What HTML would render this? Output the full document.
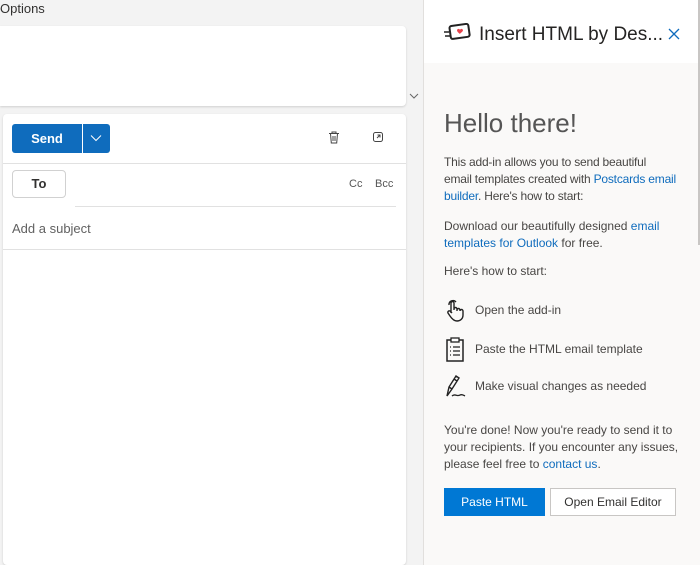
<!DOCTYPE html>
<html><head><style>
*{margin:0;padding:0;box-sizing:border-box}
body{width:700px;height:565px;overflow:hidden;background:#f3f3f3;font-family:"Liberation Sans",sans-serif;position:relative;color:#323130}
.a{position:absolute}
.p{font-size:12px;color:#484644;line-height:17px}
.l{color:#0f6cbd}
</style></head><body>
<div class="a" style="left:0;top:1px;font-size:13px;color:#323130">Options</div>
<div class="a" style="left:0;top:26px;width:406px;height:80px;background:#fff;border-radius:0 4px 4px 0;box-shadow:0 1px 2px rgba(0,0,0,.15)"></div>
<svg class="a" style="left:409px;top:92px" width="10" height="8"><path d="M1 2l4 4 4-4" stroke="#666" fill="none"/></svg>
<div class="a" style="left:3px;top:114px;width:403px;height:451px;background:#fff;border-radius:4px;box-shadow:0 1px 2px rgba(0,0,0,.15)"></div>
<div class="a" style="left:12px;top:124px;width:98px;height:29px;background:#0f6cbd;border-radius:3px"></div>
<div class="a" style="left:12px;top:124px;width:70px;height:29px;color:#fff;font-weight:bold;font-size:13px;line-height:29px;text-align:center">Send</div>
<div class="a" style="left:82px;top:124px;width:1px;height:29px;background:#fff"></div>
<svg class="a" style="left:90px;top:134px" width="12" height="8"><path d="M1 1.5l5 5 5-5" stroke="#fff" fill="none"/></svg>
<svg class="a" style="left:328px;top:131px" width="12" height="13"><path d="M1 2.5h10M4 2.5V1h4v1.5M2.5 2.5l.8 9.5h5.4l.8-9.5M5 5v5M7 5v5" stroke="#444" fill="none" stroke-width="1"/></svg>
<svg class="a" style="left:372px;top:131px" width="12" height="12"><rect x="1.5" y="1.5" width="9" height="9" rx="2" stroke="#444" fill="none"/><path d="M5 7l3-3M5.5 4H8v2.5" stroke="#444" fill="none"/></svg>
<div class="a" style="left:3px;top:163px;width:403px;height:1px;background:#e1e1e1"></div>
<div class="a" style="left:12px;top:170px;width:54px;height:28px;border:1px solid #d1d1d1;border-radius:4px;font-size:13px;font-weight:bold;line-height:26px;text-align:center">To</div>
<div class="a" style="left:349px;top:178px;font-size:11px;color:#555">Cc</div>
<div class="a" style="left:375px;top:178px;font-size:11px;color:#555">Bcc</div>
<div class="a" style="left:75px;top:206px;width:321px;height:1px;background:#e1e1e1"></div>
<div class="a" style="left:12px;top:221px;font-size:13px;color:#616161">Add a subject</div>
<div class="a" style="left:3px;top:249px;width:403px;height:1px;background:#e1e1e1"></div>

<div class="a" style="left:423px;top:0;width:277px;height:565px;background:#faf9f8;border-left:1px solid #e1dfdd"></div>
<div class="a" style="left:424px;top:0;width:276px;height:63px;background:#fff"></div>
<svg class="a" style="left:443px;top:23px" width="28" height="20"><rect x="7" y="2" width="19" height="13" rx="2" transform="rotate(-8 16 8)" stroke="#222" stroke-width="2" fill="none"/><path d="M14 7c1-2 3-1 3 0 0-1 2-2 3 0 0 2-3 3-3 4-1-1-3-2-3-4z" fill="#e8434b"/><path d="M1 9h5M2 13h5" stroke="#222" stroke-width="1.5"/></svg>
<div class="a" style="left:479px;top:24px;font-size:19px;color:#252423">Insert HTML by Des...</div>
<svg class="a" style="left:668px;top:28px" width="12" height="12"><path d="M1 1l10 10M11 1L1 11" stroke="#0f6cbd" stroke-width="1.3"/></svg>
<div class="a" style="left:444px;top:108px;font-size:26px;color:#555;">Hello there!</div>
<div class="a p" style="left:444px;top:154px;white-space:nowrap;letter-spacing:-0.2px">This add-in allows you to send beautiful<br>email templates created with <span class="l">Postcards email</span><br><span class="l">builder</span>. Here's how to start:</div>
<div class="a p" style="left:444px;top:218px;width:240px">Download our beautifully designed <span class="l">email templates for Outlook</span> for free.</div>
<div class="a p" style="left:444px;top:263px">Here's how to start:</div>
<svg class="a" style="left:445px;top:297px" width="20" height="26"><path d="M6 16V6a1.5 1.5 0 013 0v7M9 12a1.5 1.5 0 013 0v2M12 13a1.5 1.5 0 013 0v1M15 14a1.5 1.5 0 013 0v4c0 4-3 6-6 6s-5-2-7-5l-2-3a1.5 1.5 0 012-2l2 2M4 8a4 4 0 017-3" stroke="#222" stroke-width="1.4" fill="none"/></svg>
<div class="a p" style="left:475px;top:302px">Open the add-in</div>
<svg class="a" style="left:446px;top:337px" width="18" height="25"><rect x="1" y="3" width="16" height="21" stroke="#222" stroke-width="1.5" fill="none"/><rect x="5" y="1" width="8" height="4" fill="#fff" stroke="#222" stroke-width="1.3"/><path d="M4 10h1M7 10h7M4 14h1M7 14h7M4 18h1M7 18h7" stroke="#222" stroke-width="1.3"/></svg>
<div class="a p" style="left:475px;top:341px">Paste the HTML email template</div>
<svg class="a" style="left:444px;top:374px" width="24" height="26"><path d="M3 22L5 13 12 2l3 2-7 11-5 7zM5 13l3 2M10 5l3 2" stroke="#222" stroke-width="1.4" fill="none"/><path d="M8 22c3-3 5 1 8-1 2-1 3 0 5 1" stroke="#222" stroke-width="1.3" fill="none"/></svg>
<div class="a p" style="left:475px;top:378px">Make visual changes as needed</div>
<div class="a p" style="left:444px;top:422px;width:250px">You're done! Now you're ready to send it to your recipients. If you encounter any issues, please feel free to <span class="l">contact us</span>.</div>
<div class="a" style="left:444px;top:488px;width:101px;height:28px;background:#0078d4;color:#fff;font-size:12px;line-height:28px;text-align:center">Paste HTML</div>
<div class="a" style="left:550px;top:488px;width:126px;height:28px;border:1px solid #c8c6c4;background:#fff;color:#323130;font-size:12px;line-height:26px;text-align:center">Open Email Editor</div>
<div class="a" style="left:698px;top:0;width:2px;height:245px;background:#c8c6c4"></div>
</body></html>
